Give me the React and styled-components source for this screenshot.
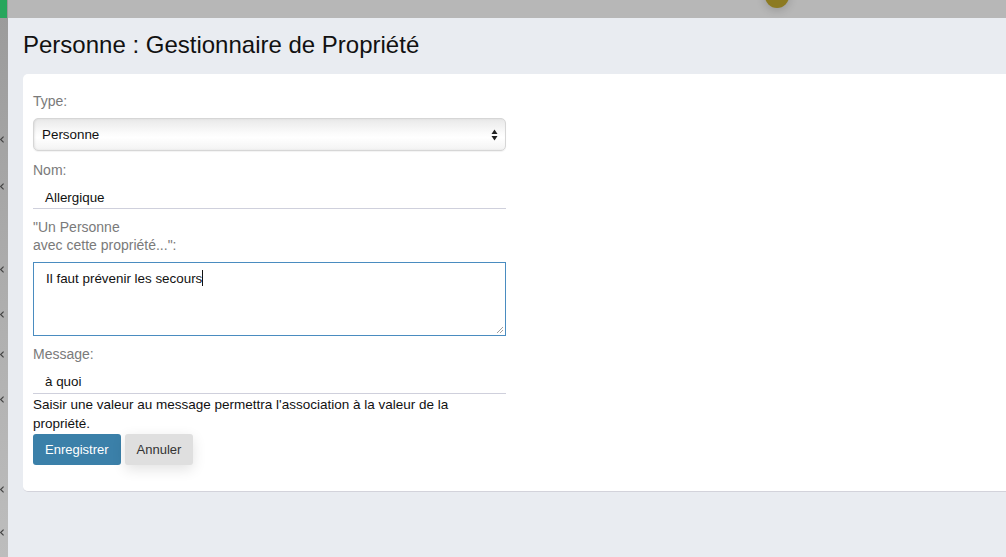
import React from "react";
import styled, { createGlobalStyle } from "styled-components";

const GlobalStyle = createGlobalStyle`
  html, body {
    margin: 0;
    padding: 0;
    background: #e9ecf1;
    font-family: "Liberation Sans", Arial, sans-serif;
    overflow: hidden;
  }
`;

const Layout = styled.div`
  display: flex;
  width: 1006px;
  height: 557px;
  overflow: hidden;
`;

const Sidebar = styled.div`
  width: 8px;
  flex-shrink: 0;
  display: flex;
  flex-direction: column;
  background: linear-gradient(180deg, #9a9a9a 0%, #b0b0b0 60%, #bdbdbd 100%);
  overflow: hidden;
`;

const SideLogo = styled.div`
  width: 7px;
  height: 18px;
  background: #27a65c;
`;

const SideItem = styled.div`
  height: ${({ $h }) => $h}px;
  display: flex;
  align-items: flex-end;
`;

const Chevron = styled.svg`
  width: 4px;
  height: 7px;
  margin-bottom: -3px;
`;

const Main = styled.div`
  flex: 1;
  display: flex;
  flex-direction: column;
  min-width: 0;
`;

const TopBar = styled.div`
  position: relative;
  height: 18px;
  flex-shrink: 0;
  background: #b7b7b7;
`;

const Avatar = styled.div`
  position: absolute;
  left: 757px;
  top: -16px;
  width: 24px;
  height: 24px;
  border-radius: 50%;
  background: #8c7a22;
  box-shadow: 0 2px 10px rgba(0, 0, 0, 0.18);
`;

const Content = styled.div`
  padding-left: 15px;
`;

const Title = styled.h1`
  margin: 0;
  padding: 14px 0 16px;
  font-size: 24px;
  line-height: 26px;
  font-weight: 400;
  color: #111;
`;

const Card = styled.div`
  background: #fff;
  border-radius: 5px 0 0 5px;
  border-bottom: 1px solid #d3d3db;
  padding: 18px 10px 26px;
`;

const Form = styled.div`
  width: 473px;
`;

const Group = styled.div`
  margin-bottom: ${({ $mb }) => $mb ?? 9}px;
`;

const Label = styled.label`
  display: block;
  font-size: 14px;
  line-height: 18px;
  color: #7a7a7a;
  margin-bottom: 8px;
`;

const Select = styled.div`
  box-sizing: border-box;
  height: 33px;
  display: flex;
  align-items: center;
  justify-content: space-between;
  padding: 0 7px 0 8px;
  border: 1px solid #d6d6d6;
  border-radius: 5px;
  background: linear-gradient(180deg, #e9e9e9 0%, #fbfbfb 45%, #ffffff 60%, #f3f3f3 100%);
  box-shadow: inset 1px 0 2px rgba(0, 0, 0, 0.08), 0 1px 1px rgba(0, 0, 0, 0.05);
  font-size: 13.4px;
  color: #111;
`;

const Arrows = styled.svg`
  width: 7px;
  height: 12px;
`;

const TextInput = styled.div`
  box-sizing: border-box;
  height: ${({ $h }) => $h ?? 22}px;
  padding: 0 12px;
  border-bottom: 1px solid #cfd0dc;
  font-size: 13.4px;
  line-height: 21px;
  color: #111;
`;

const TextArea = styled.div`
  position: relative;
  box-sizing: border-box;
  height: 74px;
  padding: 7px 12px;
  border: 1px solid #4a8cc0;
  font-size: 13.4px;
  line-height: 18px;
  color: #111;
`;

const Caret = styled.span`
  display: inline-block;
  width: 1px;
  height: 16px;
  background: #111;
  vertical-align: -3px;
`;

const Grip = styled.svg`
  position: absolute;
  right: 1px;
  bottom: 1px;
  width: 8px;
  height: 8px;
`;

const Help = styled.p`
  margin: 1px 0 0;
  font-size: 13.5px;
  line-height: 19px;
  color: #111;
`;

const Actions = styled.div`
  display: flex;
  gap: 4px;
`;

const Button = styled.button`
  height: 31px;
  padding: 0 12px;
  border: none;
  border-radius: 3px;
  font-family: inherit;
  font-size: 13px;
  background: ${({ $primary }) => ($primary ? "#3b80a9" : "#dfdfdf")};
  color: ${({ $primary }) => ($primary ? "#fff" : "#333")};
  box-shadow: ${({ $primary }) =>
    $primary ? "none" : "0 4px 14px rgba(0, 0, 0, 0.12)"};
`;

const sideGaps = [122, 47, 83, 45, 40, 45, 90, 43];

export default function App() {
  return (
    <>
      <GlobalStyle />
      <Layout>
        <Sidebar>
          <SideLogo />
          {sideGaps.map((h, i) => (
            <SideItem key={i} $h={h}>
              <Chevron viewBox="0 0 4 7">
                <path d="M3.6 0.6 L0.6 3.5 L3.6 6.4" fill="none" stroke="#444" strokeWidth="1.2" />
              </Chevron>
            </SideItem>
          ))}
        </Sidebar>
        <Main>
          <TopBar>
            <Avatar />
          </TopBar>
          <Content>
            <Title>Personne : Gestionnaire de Propriété</Title>
            <Card>
              <Form>
                <Group $mb={10}>
                  <Label>Type:</Label>
                  <Select>
                    <span>Personne</span>
                    <Arrows viewBox="0 0 7 12">
                      <path d="M3.5 0.5 L6.5 5 H0.5 Z" fill="#222" />
                      <path d="M3.5 11.5 L6.5 7 H0.5 Z" fill="#222" />
                    </Arrows>
                  </Select>
                </Group>
                <Group>
                  <Label>Nom:</Label>
                  <TextInput>Allergique</TextInput>
                </Group>
                <Group>
                  <Label>
                    "Un Personne
                    <br />
                    avec cette propriété...":
                  </Label>
                  <TextArea>
                    Il faut prévenir les secours
                    <Caret />
                    <Grip viewBox="0 0 8 8">
                      <path d="M1 7 L7 1 M4 7 L7 4" stroke="#888" strokeWidth="0.8" />
                    </Grip>
                  </TextArea>
                </Group>
                <Group $mb={1}>
                  <Label>Message:</Label>
                  <TextInput $h={23}>à quoi</TextInput>
                  <Help>
                    Saisir une valeur au message permettra l'association à la valeur
                    de la propriété.
                  </Help>
                </Group>
                <Actions>
                  <Button $primary>Enregistrer</Button>
                  <Button>Annuler</Button>
                </Actions>
              </Form>
            </Card>
          </Content>
        </Main>
      </Layout>
    </>
  );
}
